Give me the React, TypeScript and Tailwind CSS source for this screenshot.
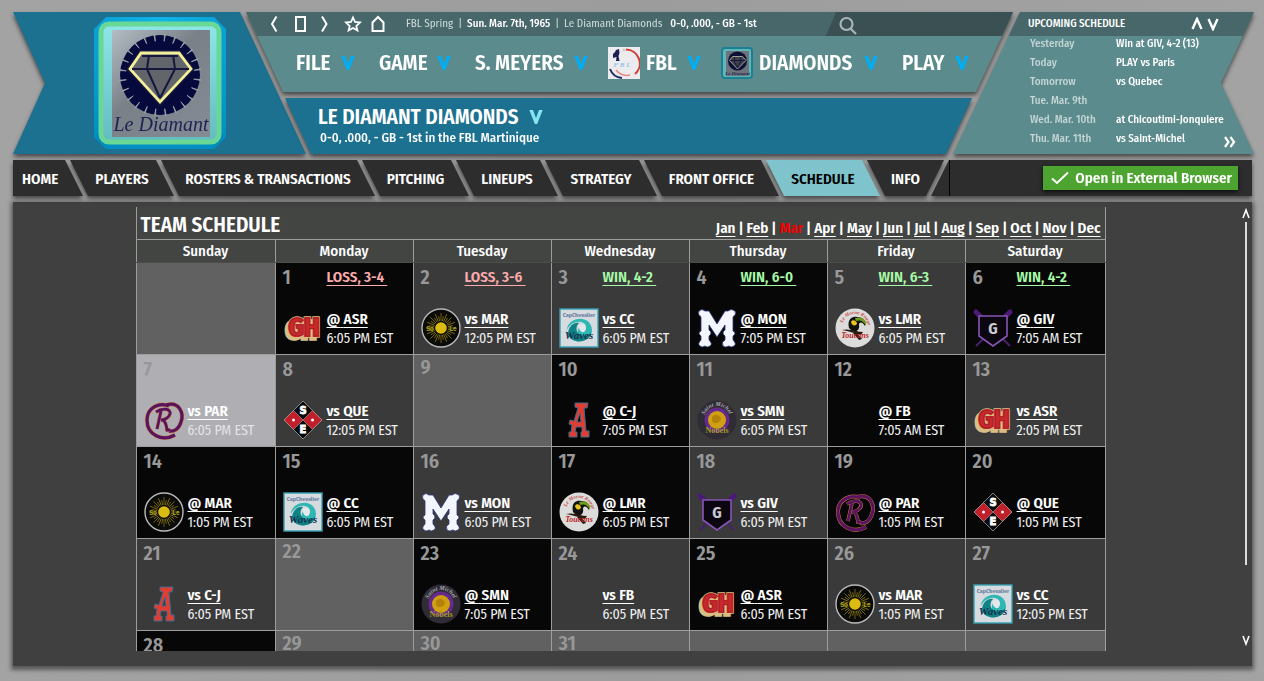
import type { ReactNode } from "react";
import clsx from "clsx";

type Game = { team: string; away: boolean; time: string; result?: string };
type Day = { num?: number; game?: Game; today?: boolean; road?: boolean };

const tabs = [
  { label: "PLAYERS", width: "w-[104px]" },
  { label: "ROSTERS & TRANSACTIONS", width: "w-[214px]" },
  { label: "PITCHING", width: "w-[107px]" },
  { label: "LINEUPS", width: "w-[102px]" },
  { label: "STRATEGY", width: "w-[112px]" },
  { label: "FRONT OFFICE", width: "w-[135px]" },
  { label: "SCHEDULE", width: "w-[114px]", active: true },
];

const upcoming = [
  ["Yesterday", "Win at GIV, 4-2 (13)"],
  ["Today", "PLAY vs Paris"],
  ["Tomorrow", "vs Quebec"],
  ["Tue. Mar. 9th", ""],
  ["Wed. Mar. 10th", "at Chicoutimi-Jonquiere"],
  ["Thu. Mar. 11th", "vs Saint-Michel"],
];

const months = ["Jan", "Feb", "Mar", "Apr", "May", "Jun", "Jul", "Aug", "Sep", "Oct", "Nov", "Dec"];
const weekdays = ["Sunday", "Monday", "Tuesday", "Wednesday", "Thursday", "Friday", "Saturday"];

const home = (team: string, time: string, result?: string): Game => ({ team, away: false, time, result });
const away = (team: string, time: string, result?: string): Game => ({ team, away: true, time, result });

const weeks: Day[][] = [
  [
    {},
    { num: 1, game: away("ASR", "6:05 PM EST", "LOSS, 3-4") },
    { num: 2, game: home("MAR", "12:05 PM EST", "LOSS, 3-6") },
    { num: 3, game: home("CC", "6:05 PM EST", "WIN, 4-2") },
    { num: 4, game: away("MON", "7:05 PM EST", "WIN, 6-0") },
    { num: 5, game: home("LMR", "6:05 PM EST", "WIN, 6-3") },
    { num: 6, game: away("GIV", "7:05 AM EST", "WIN, 4-2") },
  ],
  [
    { num: 7, game: home("PAR", "6:05 PM EST"), today: true },
    { num: 8, game: home("QUE", "12:05 PM EST") },
    { num: 9 },
    { num: 10, game: away("C-J", "7:05 PM EST") },
    { num: 11, game: home("SMN", "6:05 PM EST") },
    { num: 12, game: away("FB", "7:05 AM EST") },
    { num: 13, game: home("ASR", "2:05 PM EST") },
  ],
  [
    { num: 14, game: away("MAR", "1:05 PM EST") },
    { num: 15, game: away("CC", "6:05 PM EST") },
    { num: 16, game: home("MON", "6:05 PM EST") },
    { num: 17, game: away("LMR", "6:05 PM EST") },
    { num: 18, game: home("GIV", "6:05 PM EST") },
    { num: 19, game: away("PAR", "1:05 PM EST") },
    { num: 20, game: away("QUE", "1:05 PM EST") },
  ],
  [
    { num: 21, game: home("C-J", "6:05 PM EST") },
    { num: 22 },
    { num: 23, game: away("SMN", "7:05 PM EST") },
    { num: 24, game: home("FB", "6:05 PM EST") },
    { num: 25, game: away("ASR", "6:05 PM EST") },
    { num: 26, game: home("MAR", "1:05 PM EST") },
    { num: 27, game: home("CC", "12:05 PM EST") },
  ],
  [{ num: 28, road: true }, { num: 29 }, { num: 30 }, { num: 31 }, {}, {}, {}],
];

function Chevron({ className }: { className?: string }) {
  return (
    <svg viewBox="0 0 14 16" className={clsx("h-4 w-[14px]", className)} fill="currentColor" aria-hidden="true">
      <path d="M0.300 1 H4 L7 9 L10 1 H13.700 L8.200 15 H5.800 Z" />
    </svg>
  );
}

function ThinArrow({ up = false, className }: { up?: boolean; className?: string }) {
  return (
    <svg
      viewBox="0 0 12 14"
      className={clsx("h-[14px] w-3", up && "rotate-180", className)}
      fill="none"
      stroke="currentColor"
      strokeWidth="2.4"
      aria-hidden="true"
    >
      <path d="M1.500 2 L6 12 L10.500 2" />
    </svg>
  );
}

function Diamond() {
  return (
    <g>
      <path d="M43 39 H81 L93 55 L62 88 L32 55 Z" fill="#62656a" stroke="#14173a" strokeWidth="6" />
      <path d="M43 39 H81 L93 55 L62 88 L32 55 Z" fill="#62656a" stroke="#f3ef9c" strokeWidth="2.800" />
      <path
        d="M44 42 H80 M51 41 L49 55 L62 84 M75 41 L77 55 L62 84 M34 55 H91"
        fill="none"
        stroke="#15173f"
        strokeWidth="2"
      />
    </g>
  );
}

function ClubCrest() {
  const teeth = Array.from({ length: 24 }, (_, i) => i * 15);
  return (
    <svg viewBox="0 0 132 132" className="h-[132px] w-[132px]" role="img" aria-label="Le Diamant">
      <defs>
        <linearGradient id="crestPanel" x1="0" y1="0" x2="0.9" y2="1">
          <stop offset="0" stopColor="#b4bdc4" />
          <stop offset="0.45" stopColor="#7a8087" />
          <stop offset="1" stopColor="#858b95" />
        </linearGradient>
        <linearGradient id="crestInner" x1="0" y1="0" x2="0" y2="1">
          <stop offset="0" stopColor="#8ee6e8" />
          <stop offset="1" stopColor="#62bcc0" />
        </linearGradient>
        <radialGradient id="crestBlue" cx="0.5" cy="0.05" r="1">
          <stop offset="0" stopColor="#12b4e6" />
          <stop offset="1" stopColor="#008ec2" />
        </radialGradient>
      </defs>
      <path d="M12 0 H120 L132 12 V120 L120 132 H12 L0 120 V12 Z" fill="url(#crestBlue)" />
      <rect x="7" y="7" width="118" height="118" rx="8" fill="url(#crestInner)" stroke="#69d795" strokeWidth="5" />
      <rect x="18" y="13" width="98" height="107" fill="url(#crestPanel)" />
      <circle cx="66" cy="58" r="40" fill="#05093c" />
      {teeth.map((deg) => (
        <path key={deg} d="M65.500 17 L66 24 L66.500 17 Z" fill="#9aa1a8" stroke="#9aa1a8" strokeWidth="0.8" transform={`rotate(${deg + 7} 66 58)`} />
      ))}
      <g transform="translate(4 -3)">
        <Diamond />
      </g>
      <text
        x="67"
        y="114"
        textAnchor="middle"
        fontSize="20"
        fontStyle="italic"
        fontFamily="'Liberation Serif', serif"
        fill="#1d2452"
      >
        Le Diamant
      </text>
    </svg>
  );
}

function SmallCrest() {
  return (
    <svg viewBox="0 0 32 32" className="h-8 w-8" aria-hidden="true">
      <rect x="1" y="1" width="30" height="30" rx="3" fill="#5fb7ba" stroke="#1d7f93" strokeWidth="2" />
      <rect x="5" y="4" width="23" height="25" fill="#6d747c" />
      <circle cx="16.500" cy="14" r="9.500" fill="#0b1034" />
      <path d="M11.500 9.500 H21.500 L25 13.500 L16.500 22 L8.500 13.500 Z" fill="#3d4150" stroke="#9fa090" />
      <path d="M9 13.500 H24 M14 10 L13 13.500 L16.500 21 L20 13.500 L19 10" fill="none" stroke="#0b1034" strokeWidth="0.8" />
      <text x="16.500" y="28" textAnchor="middle" fontSize="5" fontStyle="italic" fontFamily="'Liberation Serif', serif" fill="#232a50">
        Le Diamant
      </text>
    </svg>
  );
}

function LeagueLogo() {
  return (
    <svg viewBox="0 0 32 32" className="h-8 w-8" aria-hidden="true">
      <rect width="32" height="32" fill="#ececee" />
      <path d="M18 2.500 A14 14 0 0 1 27 27" fill="none" stroke="#d23c34" strokeWidth="2" />
      <path d="M8 23 A14 14 0 0 0 22 28" fill="none" stroke="#e58a83" strokeWidth="1.5" />
      <path d="M2 22 A14 14 0 0 0 14 31" fill="none" stroke="#232a63" strokeWidth="2" />
      <path d="M5 7 L7 5 L8 3 L11 2 L11.500 6 L10.500 9 L11.500 14 H8 L8.500 10 L5 11 Z" fill="#1d2152" />
      <circle cx="16" cy="3" r="1.500" fill="#d8c9c6" />
      <text x="14" y="20" textAnchor="middle" fontSize="7" fontStyle="italic" fontFamily="'Liberation Serif', serif" fill="#8fc2ea">
        F B L
      </text>
    </svg>
  );
}

const serif = "'Liberation Serif', serif";
const condensed = "'Fira Sans Condensed', Roboto, sans-serif";

const teamArt: Record<string, ReactNode> = {
  ASR: (
    <g fontFamily={condensed} fontWeight="700" fontSize="26" textAnchor="middle">
      <text x="18" y="31" fill="#d9bd85" stroke="#d9bd85" strokeWidth="3.400">GH</text>
      <text x="21" y="28" fill="#c9282d" stroke="#d9bd85" strokeWidth="3.400">GH</text>
      <text x="21" y="28" fill="#c9282d" stroke="#c9282d" strokeWidth="2.200">GH</text>
      <text x="21" y="28" fill="none" stroke="#8a1c20" strokeWidth="0.5">GH</text>
    </g>
  ),
  MAR: (
    <g>
      <circle cx="20" cy="20" r="19" fill="#0b0b0a" stroke="#b9b9b9" strokeWidth="1.400" />
      {Array.from({ length: 32 }, (_, i) => (
        <path
          key={i}
          d={i % 2 ? "M20 13 V8" : "M20 13 V5"}
          stroke="#9a8411"
          strokeWidth="0.7"
          transform={`rotate(${(i * 360) / 32} 20 20)`}
        />
      ))}
      <circle cx="20" cy="20" r="5.800" fill="#dcbb12" />
      <text x="9" y="23" textAnchor="middle" fontSize="6" fontWeight="700" fontFamily="Inter, sans-serif" fill="#a9a51a">So</text>
      <text x="32" y="23" textAnchor="middle" fontSize="6" fontWeight="700" fontFamily="Inter, sans-serif" fill="#a9a51a">Le</text>
    </g>
  ),
  CC: (
    <g>
      <rect x="1" y="1" width="38" height="38" fill="#d6dbe0" stroke="#37a0b3" strokeWidth="1.400" />
      <path d="M8 22 C8 9 32 5 33 22 C33 33 18 37 11 29 C17 32 20 30 19 26 C18 20 22 15 27 18 C24 11 12 13 8 22 Z" fill="#2fb8b3" />
      <path d="M9 27 C9 18 15 14 20 15 C16 19 17 25 22 27 C26 29 30 27 32 24 C31 35 14 37 9 27 Z" fill="#0f8285" />
      <path d="M20 17 C25 14 29 18 26 23 C24 26 19 23 20 17 Z" fill="#e2e8ec" />
      <text x="20" y="9" textAnchor="middle" fontSize="6" fontWeight="700" fontFamily={condensed} fill="#6a7fa0">CapChevalier</text>
      <text x="20" y="31" textAnchor="middle" fontSize="11" fontWeight="700" fontStyle="italic" fontFamily={serif} fill="#16324f">Waves</text>
    </g>
  ),
  MON: (
    <path
      d="M2 3 Q5 0 8 3 L12 3 L20 16 L28 3 L31 3 Q34 0 38 3 Q40 6 36 9 V23 Q40 25 36 28 V32 Q40 36 37 38 Q34 40 32 38 Q28 40 26 38 Q24 34 28 32 V28 Q24 25 28 22 V17 L20 29 L12 17 V22 Q16 25 12 28 V32 Q16 36 13 38 Q10 40 8 38 Q5 40 3 38 Q0 36 4 32 V28 Q0 25 4 23 V9 Q0 6 2 3 Z"
      fill="#f3f5ff"
      stroke="#2b3577"
      strokeWidth="0.8"
    />
  ),
  LMR: (
    <g>
      <circle cx="20" cy="20" r="19.500" fill="#dcdcda" />
      <path id="lmrArc" d="M7 19 A13 13 0 0 1 33 19" fill="none" />
      <text fontSize="5" fontStyle="italic" fontWeight="700" fontFamily={serif} fill="#c8474b">
        <textPath href="#lmrArc" startOffset="4">Le Morne Rouge</textPath>
      </text>
      <path d="M14 20 C12 11 17 8 22 9 C29 9 31 13 30 18 C27 13 24 14 24 17 C25 21 22 24 18 24 Z" fill="#11130f" />
      <path d="M20 10 C28 8 32 12 31 18 C28 12 24 12 21 13 Z" fill="#6f9c1d" />
      <path d="M16 14 C17 11 21 12 22 15 C22 18 17 19 16 14 Z" fill="#e8c51c" />
      <path d="M7 22 C15 20 22 24 28 24 L26 27 C18 25 14 23 7 22 Z M21 24 L27 31 L24 32 L18 25 Z" fill="#2a1a12" />
      <text x="20" y="30" textAnchor="middle" fontSize="8" fontWeight="700" fontStyle="italic" fontFamily={serif} fill="#bf1f26">Toucans</text>
    </g>
  ),
  GIV: (
    <g>
      <path d="M2 4 L37 38 M38 4 L3 38" stroke="#45216c" strokeWidth="2" />
      <path d="M3 4 L10 11 M37 4 L30 11" stroke="#4a1a77" strokeWidth="5" strokeLinecap="round" />
      <path d="M6 8 H34 V28 L20 38 L6 28 Z" fill="#0b060f" stroke="#8656b5" strokeWidth="1.600" />
      <text x="20" y="26" textAnchor="middle" fontSize="16" fontWeight="700" fontFamily={condensed} fill="#c9c9cf">G</text>
    </g>
  ),
  PAR: (
    <g fill="none">
      <path d="M31 35 C18 42 3 35 3 20 C3 7 16 2 25 6 M22 5 C36 1 40 14 37 22 C35 29 30 32 25 31" stroke="#c9863c" strokeWidth="4" />
      <path d="M31 35 C18 42 3 35 3 20 C3 7 16 2 25 6 M22 5 C36 1 40 14 37 22 C35 29 30 32 25 31" stroke="#5b1360" strokeWidth="3.200" />
      <path d="M17 11 L13 29 M12 12 C18 8 27 8 26 14 C25 18 20 20 17 20 M19 20 Q22 22 23 30 L26 30" stroke="#c9863c" strokeWidth="3.600" />
      <path d="M17 11 L13 29 M12 12 C18 8 27 8 26 14 C25 18 20 20 17 20 M19 20 Q22 22 23 30 L26 30" stroke="#5b1360" strokeWidth="2.800" />
    </g>
  ),
  QUE: (
    <g>
      <path d="M20 1 L39 20 L20 39 L1 20 Z" fill="#0b0b0b" stroke="#9f9f9f" strokeWidth="0.8" />
      <path d="M10.500 10.500 L20 20 L10.500 29.500 L1 20 Z M29.500 10.500 L39 20 L29.500 29.500 L20 20 Z" fill="#c1202b" stroke="#a9a9a9" strokeWidth="0.6" />
      <circle cx="10.500" cy="20" r="1.500" fill="#fff" />
      <circle cx="29.500" cy="20" r="1.500" fill="#fff" />
      <g fontFamily="'DejaVu Sans', sans-serif" fontSize="10" fontWeight="700" textAnchor="middle" fill="#fff" stroke="#fff" strokeWidth="0.8">
        <text x="20" y="14">S</text>
        <text x="20" y="33">E</text>
      </g>
    </g>
  ),
  "C-J": (
    <path
      d="M16 3 H29 L28 8 H25 L27 31 H30 V37 H22 V32 H23 L23 27 H17 L16 32 H18 V37 H10 V32 H12 L13 25 L10 24 L11 20 L15 21 L19 8 L16 7 Z M18 22 H22 L21 13 Z"
      fill="#e23d33"
      fillRule="evenodd"
      stroke="#3f6b8c"
      strokeWidth="1"
    />
  ),
  SMN: (
    <g>
      <circle cx="20" cy="20" r="19.500" fill="#302c35" />
      <circle cx="20" cy="20" r="12.500" fill="#642b8c" />
      <circle cx="20" cy="20" r="9" fill="#d0a012" />
      <path d="M15 17 Q18 13 22 16 Q26 18 22 22 Q17 25 15 21 Z" fill="#b3830c" />
      <path id="smnTop" d="M7 19 A13 13 0 0 1 33 19" fill="none" />
      <text fontSize="6" fontWeight="700" fontStyle="italic" fontFamily={serif} fill="#a9a7ad">
        <textPath href="#smnTop" startOffset="4">Saint Michel</textPath>
      </text>
      <text x="20" y="33" textAnchor="middle" fontSize="8" fontWeight="700" fontFamily={serif} fill="#a59a25">Nobels</text>
    </g>
  ),
};

function TeamLogo({ team }: { team: string }) {
  return (
    <svg viewBox="0 0 40 40" className="h-10 w-10 shrink-0 overflow-visible" aria-hidden="true">
      {teamArt[team]}
    </svg>
  );
}

function MenuItem({ label, icon, width }: { label: string; icon?: ReactNode; width: string }) {
  return (
    <button type="button" className={clsx("flex items-center whitespace-nowrap text-[21px] leading-8 font-semibold", width)}>
      {icon && <span className="mr-1.5 shrink-0">{icon}</span>}
      <span className="grow text-left">{label}</span>
      <Chevron className="shrink-0 text-[#00aef5]" />
    </button>
  );
}

function TopBar() {
  return (
    <div className="flex h-6 items-center bg-[#48676a] pl-[22px] text-[11px]">
      <div className="flex items-center">
        <button type="button" aria-label="Back" className="w-5">
          <svg viewBox="0 0 12 18" className="h-[18px] w-3" fill="none" stroke="#fff" strokeWidth="2"><path d="M8.500 1.500 L4 9 L8.500 16.500" /></svg>
        </button>
        <button type="button" aria-label="Bookmark" className="ml-1.5 w-6">
          <svg viewBox="0 0 14 18" className="h-[18px] w-[14px]" fill="none" stroke="#fff" strokeWidth="2"><path d="M2 2 H11 V16 H2 Z" /></svg>
        </button>
        <button type="button" aria-label="Forward" className="w-[26px]">
          <svg viewBox="0 0 12 18" className="h-[18px] w-3" fill="none" stroke="#fff" strokeWidth="2"><path d="M4 1.500 L8.500 9 L4 16.500" /></svg>
        </button>
        <button type="button" aria-label="Favorites" className="w-[26px]">
          <svg viewBox="0 0 18 18" className="h-[18px] w-[18px]" fill="none" stroke="#fff" strokeWidth="1.800">
            <path d="M9 2.500 L11 7 L16 7.500 L12.300 11 L13.400 15.500 L9 13 L4.600 15.500 L5.700 11 L2 7.500 L7 7 Z" />
          </svg>
        </button>
        <button type="button" aria-label="Home" className="w-5">
          <svg viewBox="0 0 16 18" className="h-[18px] w-4" fill="none" stroke="#fff" strokeWidth="2">
            <path d="M2.500 16 V7.500 L8 2 L13.500 7.500 V16 Z" />
          </svg>
        </button>
      </div>
      <p className="ml-4 flex grow whitespace-nowrap text-[#cfdcdc]">
        <span>FBL Spring</span>
        <span className="mx-[5px]">|</span>
        <span className="font-medium text-white">Sun. Mar. 7th, 1965</span>
        <span className="mx-[5px]">|</span>
        <span>Le Diamant Diamonds</span>
        <span className="ml-2 font-medium text-white">0-0, .000, - GB - 1st</span>
      </p>
      <label className="flex h-6 w-[187px] items-center bg-[#3a5053] pl-3 [clip-path:polygon(10px_0,100%_0,100%_100%,0_100%)]">
        <svg viewBox="0 0 20 20" className="mt-1 h-5 w-5 shrink-0" fill="none" stroke="#a8b5b6" strokeWidth="2.200">
          <circle cx="8.500" cy="8" r="6" />
          <path d="M12.500 12.500 L18 18" />
        </svg>
        <input type="text" aria-label="Search" className="h-5 w-32 bg-transparent pl-1 text-white outline-none" />
      </label>
    </div>
  );
}

function Header() {
  return (
    <header className="flex h-[142px] text-white">
      <div className="w-[293px] shrink-0 drop-shadow-[0_3px_2px_rgba(0,0,0,0.55)]">
        <div className="flex h-full items-center bg-[#1c7090] pl-[81px] [clip-path:polygon(0_0,227px_0,100%_100%,0_100%,32px_50%)]">
          <ClubCrest />
        </div>
      </div>

      <div className="-ml-[60px] flex min-w-0 flex-1 flex-col gap-1.5">
        <div className="drop-shadow-[0_3px_2px_rgba(0,0,0,0.55)]">
          <div className="h-20 bg-[#5c8b8d] [clip-path:polygon(0_0,100%_0,calc(100%-37px)_100%,37px_100%)]">
            <TopBar />
            <nav className="flex h-[54px] items-center pl-[50px]">
              <MenuItem label="FILE" width="w-[59px]" />
              <MenuItem label="GAME" width="ml-6 w-[72px]" />
              <MenuItem label="S. MEYERS" width="ml-6 w-[113px]" />
              <MenuItem label="FBL" icon={<LeagueLogo />} width="ml-5 w-[93px]" />
              <MenuItem label="DIAMONDS" icon={<SmallCrest />} width="ml-5 w-[157px]" />
              <MenuItem label="PLAY" width="ml-6 w-[67px]" />
            </nav>
          </div>
        </div>
        <div className="mr-[41px] ml-[39px] drop-shadow-[0_3px_2px_rgba(0,0,0,0.55)]">
          <div className="h-14 bg-[#1c7090] pt-[7px] pl-[33px] [clip-path:polygon(0_0,100%_0,calc(100%-26px)_100%,26px_100%)]">
            <button type="button" className="flex items-center text-[21px] leading-6 font-semibold">
              LE DIAMANT DIAMONDS
              <Chevron className="ml-2.5 text-[#84e4f2]" />
            </button>
            <p className="pl-0.5 text-[13px] leading-[18px] font-medium">0-0, .000, - GB - 1st in the FBL Martinique</p>
          </div>
        </div>
      </div>

      <section className="-ml-[60px] w-[301px] shrink-0 drop-shadow-[0_3px_2px_rgba(0,0,0,0.55)]">
        <div className="h-full bg-[#5c8b8d] text-[11px] [clip-path:polygon(67px_0,100%_0,268px_50%,100%_100%,0_100%)]">
          <div className="flex h-6 items-center bg-[#48676a] pl-[75px]">
            <h2 className="w-40 font-medium">UPCOMING SCHEDULE</h2>
            <button type="button" aria-label="Earlier" className="ml-[3px]"><ThinArrow up /></button>
            <button type="button" aria-label="Later" className="ml-1"><ThinArrow /></button>
          </div>
          <div className="-mt-0.5 flex">
            <table className="ml-[77px]">
              <tbody>
                {upcoming.map(([day, text]) => (
                  <tr key={day} className="h-[19px] leading-[19px]">
                    <th scope="row" className="w-[86px] p-0 text-left font-medium whitespace-nowrap text-[#c3d5d5]">{day}</th>
                    <td className="p-0 font-medium whitespace-nowrap">{text}</td>
                  </tr>
                ))}
              </tbody>
            </table>
            <button type="button" aria-label="Full schedule" className="self-end">
              <svg viewBox="0 0 12 12" className="h-3 w-3" fill="none" stroke="#fff" strokeWidth="2.200">
                <path d="M1 1 L4.500 6 L1 11 M6.500 1 L10 6 L6.500 11" />
              </svg>
            </button>
          </div>
        </div>
      </section>
    </header>
  );
}

function NavTabs() {
  const tab = "flex h-9 items-center bg-[#2d2d2d] pt-0.5";
  return (
    <nav className="flex h-9 text-[15px] font-semibold whitespace-nowrap text-white drop-shadow-[0_3px_2px_rgba(0,0,0,0.55)]">
      <a href="#home" className={clsx(tab, "w-[70px] shrink-0 pl-[9px] [clip-path:polygon(0_0,calc(100%-18px)_0,100%_100%,0_100%)]")}>
        HOME
      </a>
      {tabs.map((t) => (
        <a
          key={t.label}
          href="#tab"
          className={clsx(
            "-ml-[13px] flex h-9 shrink-0 items-center justify-center pt-0.5 [clip-path:polygon(0_0,calc(100%-18px)_0,100%_100%,18px_100%)]",
            t.width,
            t.active ? "bg-[#7fc4cd] text-black" : "bg-[#2d2d2d]",
          )}
        >
          {t.label}
        </a>
      ))}
      <a href="#info" className={clsx(tab, "-ml-[13px] w-[77px] shrink-0 justify-center [clip-path:polygon(0_0,100%_0,calc(100%-18px)_100%,18px_100%)]")}>
        INFO
      </a>
      <div className="-ml-[13px] flex h-9 grow bg-[#2d2d2d] pl-[18px] [clip-path:polygon(18px_0,100%_0,100%_100%,0_100%)]">
        <div className="flex h-9 grow items-center justify-end border-l border-black pr-[14px]">
          <button type="button" className="flex h-6 w-[195px] items-center justify-between bg-[#4ea431] pr-1.5 pl-2 shadow-[0_2px_4px_rgba(0,0,0,0.7)]">
            <svg viewBox="0 0 18 14" className="h-[14px] w-[18px]" fill="none" stroke="#fff" strokeWidth="2">
              <path d="M1 7.500 L6 12 L17 1.500" />
            </svg>
            Open in External Browser
          </button>
        </div>
      </div>
    </nav>
  );
}

function DayCell({ day }: { day: Day }) {
  const { num, game, today, road } = day;
  const played = Boolean(game) || road;
  return (
    <td
      className={clsx(
        "h-[92px] border border-[#9d9d9d] p-0 align-top",
        !played && "bg-[#616161]",
        played && today && "bg-[#aeaeb3]",
        played && !today && (road || game?.away ? "bg-[#070707]" : "bg-[#3a3a3a]"),
      )}
    >
      <div className={clsx("flex pl-[7px]", played ? "h-[45px] pt-0.5" : "pt-0")}>
        <span className="w-11 text-xl leading-6 font-semibold text-[#989898]">{num}</span>
        {game?.result && (
          <a
            href="#boxscore"
            className={clsx(
              "text-[15px] leading-6 font-semibold whitespace-pre underline underline-offset-3",
              game.result.startsWith("WIN") ? "text-[#a6f9a6]" : "text-[#fdabab]",
            )}
          >
            {game.result + " "}
          </a>
        )}
      </div>
      {game && (
        <div className="flex pl-[7px]">
          <TeamLogo team={game.team} />
          <div className="ml-1 whitespace-nowrap text-white">
            <a href="#team" className="block h-[21px] text-[15px] leading-[22px] font-semibold underline underline-offset-3">
              {game.away ? "@" : "vs"} {game.team}
            </a>
            <p className={clsx("text-sm leading-5", today ? "text-[#e4e4e6]" : "text-[#f0f0f0]")}>{game.time}</p>
          </div>
        </div>
      )}
    </td>
  );
}

function ScheduleTable() {
  return (
    <div className="mx-auto h-full w-[970px] overflow-hidden">
      <div className="flex h-8 items-end justify-between border-x border-[#9d9d9d] bg-[#434543] px-1 text-white">
        <h1 className="text-[21px] leading-7 font-semibold">TEAM SCHEDULE</h1>
        <p className="flex text-[15px] leading-[21px] font-semibold">
          {months.map((m, i) => (
            <span key={m} className="flex">
              {i > 0 && <span className="mx-[3px]">|</span>}
              {m === "Mar" ? (
                <span className="text-[#f00000]">{m}</span>
              ) : (
                <a href="#month" className="underline underline-offset-3">{m}</a>
              )}
            </span>
          ))}
        </p>
      </div>
      <table className="w-full table-fixed border-collapse">
        <thead>
          <tr className="h-[23px] bg-[#434543]">
            {weekdays.map((d) => (
              <th
                key={d}
                className="border border-[#9d9d9d] border-b-[#4d4d4d] p-0 text-[15px] leading-[22px] font-medium text-white first:w-[139px] last:w-[140px]"
              >
                {d}
              </th>
            ))}
          </tr>
        </thead>
        <tbody>
          {weeks.map((week, w) => (
            <tr key={w}>
              {week.map((day, d) => (
                <DayCell key={d} day={day} />
              ))}
            </tr>
          ))}
        </tbody>
      </table>
    </div>
  );
}

export default function App() {
  return (
    <div className="flex h-screen flex-col bg-linear-to-r from-[#a3a3a3] via-[#9c9c9c] to-[#a3a3a3] pt-3 pr-[10px] pb-[15px] pl-[13px] font-['Fira_Sans_Condensed',Roboto,sans-serif]">
      <Header />
      <div className="mt-1.5 pr-0.5">
        <NavTabs />
      </div>
      <main className="mt-1.5 mr-0.5 flex min-h-0 flex-1 bg-[#404040] pt-[5px] pb-[15px] shadow-[0_2px_4px_2px_rgba(0,0,0,0.45)]">
        <div className="min-w-0 flex-1">
          <ScheduleTable />
        </div>
        <div className="flex w-6 flex-col items-end text-white">
          <button type="button" aria-label="Scroll up" className="flex w-3 justify-center">
            <svg viewBox="0 0 8 12" className="h-3 w-2" fill="none" stroke="currentColor" strokeWidth="1.600"><path d="M1 11 L4 3 L7 11" /></svg>
          </button>
          <div className="mt-[3px] mr-[5px] w-0.5 grow">
            <div className="h-[83%] bg-[#dcdcdc]" />
          </div>
          <button type="button" aria-label="Scroll down" className="mb-1 flex w-3 justify-center">
            <svg viewBox="0 0 8 12" className="h-3 w-2" fill="none" stroke="currentColor" strokeWidth="1.600"><path d="M1 1 L4 9 L7 1" /></svg>
          </button>
        </div>
      </main>
    </div>
  );
}
